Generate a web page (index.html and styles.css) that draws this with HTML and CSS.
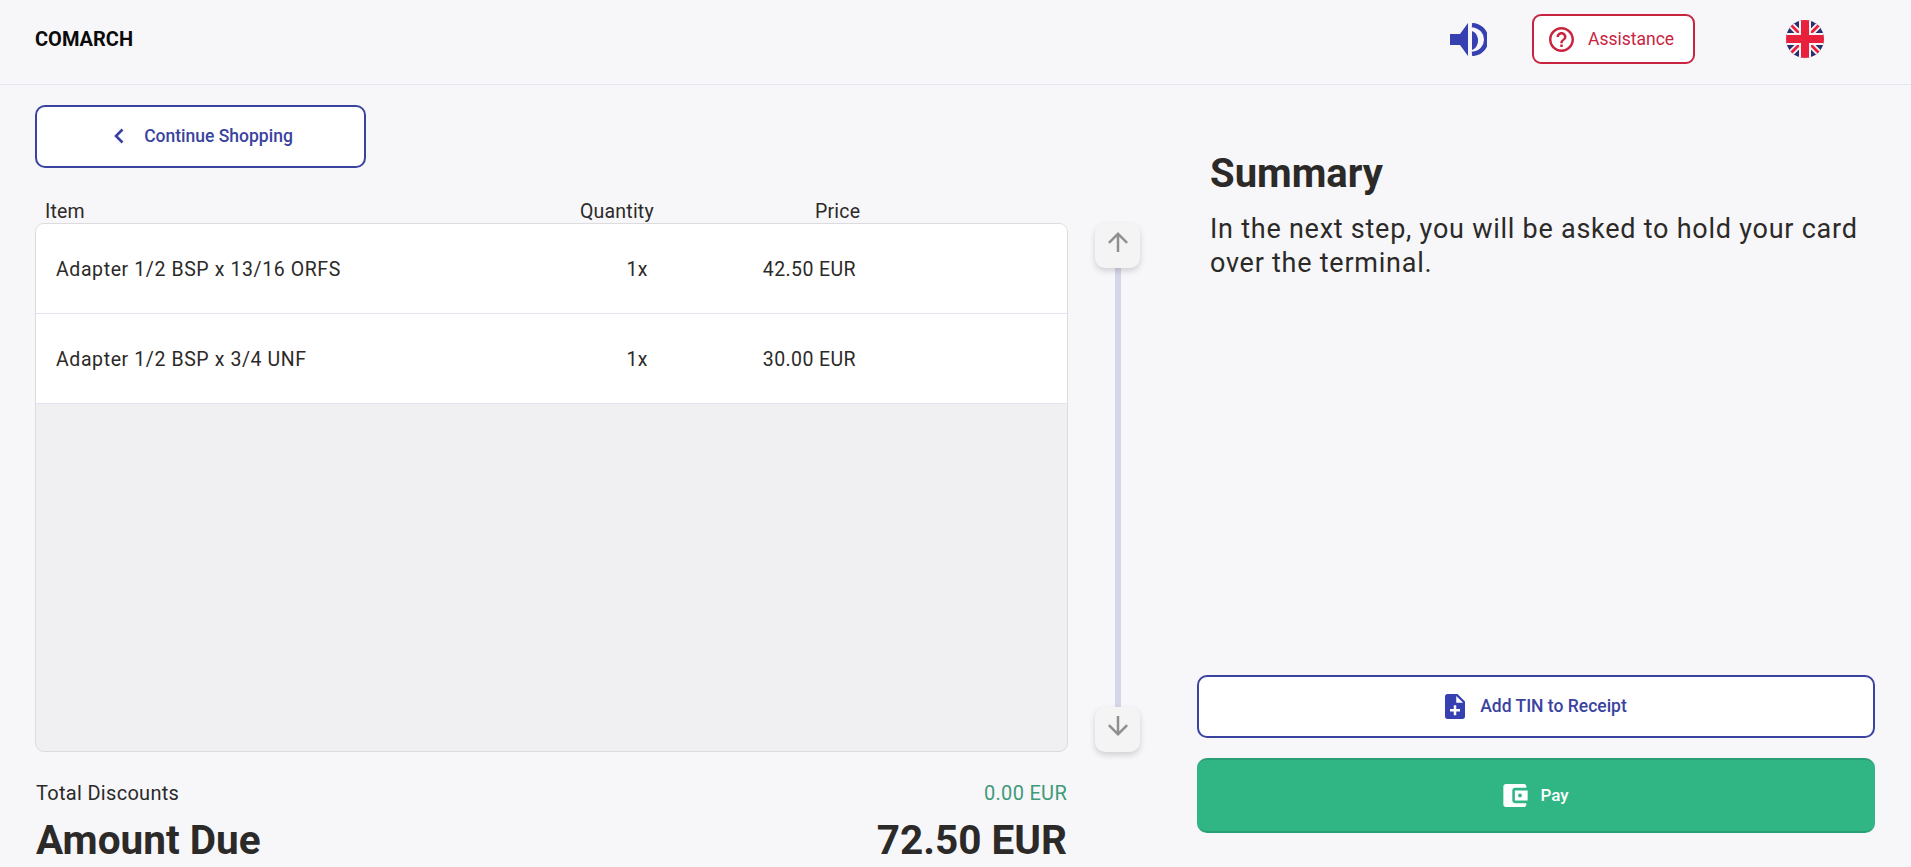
FILE: index.html
```html
<!DOCTYPE html>
<html lang="en">
<head>
<meta charset="utf-8">
<title>Checkout</title>
<link rel="stylesheet" href="styles.css">
</head>
<body>
<header class="topbar">
  <div class="brand">COMARCH</div>
  <div class="top-actions">
    <svg class="sound" viewBox="0 0 37 33" aria-hidden="true"><path d="M0 11H10L18 0V33L10 22H0Z" fill="#3740b0"/><path d="M22 8C30 11 30 24 22 27Z" fill="#3740b0"/><path d="M22 2C41 4 41 29 22 31" fill="none" stroke="#3740b0" stroke-width="4.500"/></svg>
    <button class="assist">
      <svg class="assist-icon" viewBox="2 2 20 20" aria-hidden="true"><path d="M11 18h2v-2h-2v2zm1-16C6.48 2 2 6.48 2 12s4.48 10 10 10 10-4.48 10-10S17.52 2 12 2zm0 18c-4.41 0-8-3.59-8-8s3.59-8 8-8 8 3.59 8 8-3.59 8-8 8zm0-14c-2.21 0-4 1.790-4 4h2c0-1.100.9-2 2-2s2 .9 2 2c0 2-3 1.750-3 5h2c0-2.250 3-2.500 3-5 0-2.210-1.790-4-4-4z" fill="#c8243f"/></svg>
      <span>Assistance</span>
    </button>
    <svg class="flag" viewBox="0 0 38 38" aria-hidden="true">
      <defs><clipPath id="round"><circle cx="19" cy="19" r="19"/></clipPath></defs>
      <g clip-path="url(#round)">
        <rect width="38" height="38" fill="#26306f"/>
        <path d="M0 0L38 38M38 0L0 38" stroke="#f6f3f5" stroke-width="6.500"/>
        <path d="M0 0L38 38M38 0L0 38" stroke="#e8203c" stroke-width="2.800"/>
        <rect x="13" width="12" height="38" fill="#f6f3f5"/>
        <rect y="13" width="38" height="12" fill="#f6f3f5"/>
        <rect x="15" width="8" height="38" fill="#e8203c"/>
        <rect y="15" width="38" height="8" fill="#e8203c"/>
      </g>
    </svg>
  </div>
</header>
<main class="page">
  <section class="left">
    <button class="btn outline back">
      <svg class="chev" viewBox="0 0 12 18" aria-hidden="true"><path d="M9.500 2.500L3 9L9.500 15.500" fill="none" stroke="#3740a0" stroke-width="2.600"/></svg>
      <span>Continue Shopping</span>
    </button>
    <div class="cart">
      <div class="cart-main">
        <div class="cols">
          <span class="col-item">Item</span>
          <span class="col-qty">Quantity</span>
          <span class="col-price">Price</span>
        </div>
        <div class="list">
          <div class="row"><span class="r-name">Adapter 1/2 BSP x 13/16 ORFS</span><span class="r-qty">1x</span><span class="r-price">42.50 EUR</span></div>
          <div class="row"><span class="r-name">Adapter 1/2 BSP x 3/4 UNF</span><span class="r-qty">1x</span><span class="r-price">30.00 EUR</span></div>
        </div>
      </div>
      <div class="scroller">
        <button class="scroll-btn">
          <svg viewBox="0 0 24 24" aria-hidden="true"><path d="M4 12l1.410 1.410L11 7.830V20h2V7.830l5.580 5.590L20 12l-8-8-8 8z" fill="#8f8f8f"/></svg>
        </button>
        <div class="track"></div>
        <button class="scroll-btn">
          <svg viewBox="0 0 24 24" aria-hidden="true"><path d="M20 12l-1.410-1.410L13 16.170V4h-2v12.170l-5.580-5.590L4 12l8 8 8-8z" fill="#8f8f8f"/></svg>
        </button>
      </div>
    </div>
    <div class="totals">
      <div class="discount"><span>Total Discounts</span><span class="disc-val">0.00 EUR</span></div>
      <div class="due"><span>Amount Due</span><span>72.50 EUR</span></div>
    </div>
  </section>
  <aside class="right">
    <div class="summary">
      <h1>Summary</h1>
      <p>In the next step, you will be asked to hold your card over the terminal.</p>
    </div>
    <div class="actions">
      <button class="btn outline wide">
        <svg class="doc" viewBox="4 2 16 20" aria-hidden="true"><path d="M14 2H6c-1.100 0-2 .9-2 2v16c0 1.100.9 2 2 2h12c1.100 0 2-.9 2-2V8l-6-6zm2 14h-3v3h-2v-3H8v-2h3v-3h2v3h3v2zm-3-7V3.500L18.500 9H13z" fill="#3740b0"/></svg>
        <span>Add TIN to Receipt</span>
      </button>
      <button class="btn pay">
        <svg class="wallet" viewBox="3 3 19 18" aria-hidden="true"><path d="M21 18v1c0 1.100-.9 2-2 2H5c-1.110 0-2-.9-2-2V5c0-1.100.89-2 2-2h14c1.100 0 2 .9 2 2v1h-9c-1.110 0-2 .9-2 2v8c0 1.100.89 2 2 2h9zm-9-2h10V8H12v8zm4-2.500c-.83 0-1.500-.67-1.500-1.500s.67-1.500 1.500-1.500 1.500.67 1.500 1.500-.67 1.500-1.500 1.500z" fill="#fff"/></svg>
        <span>Pay</span>
      </button>
    </div>
  </aside>
</main>
</body>
</html>
```
FILE: styles.css
```css
* { box-sizing: border-box; }
html, body { margin: 0; height: 867px; overflow: hidden; }
body { background: #f7f7fa; color: #2c2a28; font-family: Roboto, "Liberation Sans", sans-serif; }
button { font-family: inherit; cursor: pointer; }

.topbar { height: 85px; border-bottom: 1px solid #e6e6f0; display: flex; align-items: center; justify-content: space-between; padding: 0 0 0 35px; }
.brand { font-size: 20px; font-weight: 700; color: #0b0b0b; position: relative; top: -3px; }
.top-actions { display: flex; align-items: center; margin-right: 87px; position: relative; top: -3px; }
.sound { width: 37px; height: 33px; margin-right: 45px; }
.assist { width: 163px; height: 50px; background: #fff; border: 2px solid #c8243f; border-radius: 9px; display: flex; align-items: center; gap: 14px; padding: 0 0 0 15px; color: #c8243f; font-size: 17.500px; font-weight: 400; }
.assist-icon { width: 25px; height: 25px; }
.flag { width: 38px; height: 38px; margin-left: 91px; }

.page { display: flex; height: 782px; padding-left: 35px; }
.left { width: 1105px; padding-top: 20px; }
.btn { display: flex; align-items: center; justify-content: center; border-radius: 10px; font-size: 17.500px; font-weight: 500; padding-bottom: 2px; }
.outline { background: #fff; border: 2px solid #3a43a0; color: #3a43a0; }
.back { width: 331px; height: 63px; padding-left: 11px; gap: 19px; }
.chev { width: 12px; height: 18px; }

.cart { display: flex; margin-top: 32px; }
.cart-main { width: 1033px; }
.cols { height: 23px; position: relative; font-size: 19.500px; line-height: 24px; letter-spacing: .2px; }
.col-item { position: absolute; left: 10px; top: 0; }
.col-qty { position: absolute; left: 545px; top: 0; }
.col-price { position: absolute; left: 780px; top: 0; }
.list { height: 529px; background: #f0f0f3; border: 1px solid #dcdcdf; border-radius: 9px; overflow: hidden; }
.row { height: 90px; background: #fff; border-bottom: 1px solid #e3e4f0; display: flex; align-items: center; font-size: 19.500px; letter-spacing: .6px; padding: 1px 0 0 20px; }
.r-name { width: 560px; }
.r-qty { width: 42px; text-align: center; letter-spacing: .2px; }
.r-price { width: 198px; text-align: right; letter-spacing: .4px; }

.scroller { width: 45px; margin-left: 27px; margin-top: 23px; height: 529px; display: flex; flex-direction: column; align-items: center; }
.scroll-btn { width: 45px; height: 45px; padding: 0 0 7px; background: #f4f4f5; border: 0; border-radius: 10px; box-shadow: 0 3px 6px rgba(0,0,0,.16); display: flex; align-items: center; justify-content: center; position: relative; z-index: 1; }
.scroll-btn svg { width: 30px; height: 30px; }
.track { width: 6px; flex: 1; background: #d5d6e9; }

.totals { width: 1031px; margin: 30px 0 0 1px; }
.discount { display: flex; justify-content: space-between; font-size: 20px; line-height: 22px; letter-spacing: .3px; }
.disc-val { color: #3f9a78; }
.due { display: flex; justify-content: space-between; margin-top: 12px; font-size: 40.500px; line-height: 48px; font-weight: 700; }

.right { flex: 1; display: flex; flex-direction: column; padding-left: 57px; padding-right: 36px; }
.summary { padding-left: 13px; padding-top: 67px; flex: 1; }
.summary h1 { margin: 0; font-size: 40px; line-height: 44px; font-weight: 700; }
.summary p { margin: 17px 0 0; font-size: 27px; line-height: 33.500px; letter-spacing: .75px; }
.actions { display: flex; flex-direction: column; gap: 20px; padding-bottom: 34px; }
.wide { height: 63px; gap: 15px; }
.doc { width: 20px; height: 25px; }
.pay { height: 75px; background: #30b584; border: 0; border-bottom: 2px solid #2a9e74; border-top: 2px solid #2a9e74; color: #fff; gap: 12px; font-size: 17px; }
.wallet { width: 25px; height: 23px; }
```
